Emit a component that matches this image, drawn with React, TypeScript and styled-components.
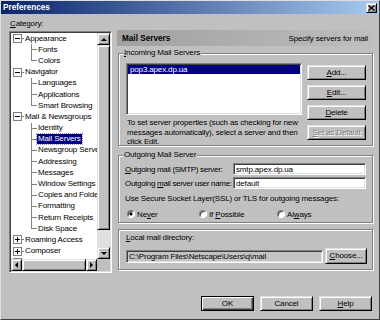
import React from 'react';
import styled, { createGlobalStyle, css } from 'styled-components';

const FONT = `"Liberation Sans", Arial, sans-serif`;

const GlobalStyle = createGlobalStyle`
  html, body {
    margin: 0;
    padding: 0;
    background: #c0c0c0;
  }
  body {
    font-family: ${FONT};
  }
`;

const raised = css`
  box-sizing: border-box;
  background: #c0c0c0;
  border: 1px solid;
  border-color: #dfdfdf #000 #000 #dfdfdf;
  box-shadow: inset 1px 1px #fff, inset -1px -1px #808080;
`;

const sunken = css`
  box-sizing: border-box;
  border: 1px solid;
  border-color: #808080 #fff #fff #808080;
  box-shadow: inset 1px 1px #404040, inset -1px -1px #dfdfdf;
  padding: 1px;
`;

const Window = styled.div`
  width: 380px;
  height: 320px;
  box-sizing: border-box;
  display: flex;
  flex-direction: column;
  background: #c0c0c0;
  border: 1px solid;
  border-color: #dfdfdf #404040 #404040 #dfdfdf;
  font-family: ${FONT};
  font-size: 8px;
  letter-spacing: -0.15px;
  color: #000;
  overflow: hidden;
`;

const TitleBar = styled.div`
  height: 13px;
  flex: none;
  display: flex;
  align-items: center;
  justify-content: space-between;
  padding: 0 2px 0 2px;
  background: linear-gradient(to right, #0a246a, #a6caf0);
`;

const Title = styled.span`
  color: #fff;
  font-weight: bold;
  font-size: 8.2px;
  letter-spacing: 0;
`;

const CloseButton = styled.span`
  ${raised};
  width: 11px;
  height: 10px;
  display: flex;
  align-items: center;
  justify-content: center;
`;

const Body = styled.div`
  display: flex;
  padding: 5px 6px 0 8px;
`;

const LeftPane = styled.div`
  width: 103px;
  flex: none;
  display: flex;
  flex-direction: column;
`;

const PaneLabel = styled.div`
  height: 10px;
  line-height: 10px;
  margin-bottom: 2px;
  padding-left: 1px;
`;

const U = styled.span`
  text-decoration: underline;
`;

const TreeBox = styled.div`
  ${sunken};
  width: 103px;
  height: 242px;
  display: flex;
  flex-direction: column;
`;

const TreeMain = styled.div`
  flex: 1;
  min-height: 0;
  display: flex;
`;

const TreeList = styled.div`
  flex: 1;
  min-width: 0;
  overflow: hidden;
  background: #fff;
`;

const TreeRow = styled.div`
  height: 11.2px;
  display: flex;
  align-items: center;
  white-space: nowrap;
`;

const Expander = styled.svg`
  flex: none;
  margin-left: 2px;
`;

const Dash = styled.span`
  flex: none;
  width: 2px;
  height: 1px;
  background: #808080;
`;

const Connector = styled.span<{ $last: boolean }>`
  flex: none;
  align-self: stretch;
  width: 6px;
  margin-left: 20px;
  background:
    linear-gradient(#808080, #808080) left top / 1px ${(p) => (p.$last ? '50%' : '100%')} no-repeat,
    linear-gradient(#808080, #808080) left center / 100% 1px no-repeat;
`;

const ItemLabel = styled.span<{ $selected?: boolean }>`
  padding: 0 1px;
  line-height: 10px;
  ${(p) =>
    p.$selected &&
    css`
      background: #000080;
      color: #fff;
      outline: 1px dotted #9090c8;
    `}
`;

const VScroll = styled.div`
  width: 13px;
  flex: none;
  display: flex;
  flex-direction: column;
  background: #e0e0e0;
`;

const ScrollArrow = styled.div<{ $w: number; $h: number }>`
  ${raised};
  flex: none;
  width: ${(p) => p.$w}px;
  height: ${(p) => p.$h}px;
  display: flex;
  align-items: center;
  justify-content: center;
`;

const Thumb = styled.div<{ $size?: number }>`
  ${raised};
  flex: ${(p) => (p.$size ? 'none' : '1')};
  ${(p) => p.$size && `height: ${p.$size}px;`}
`;

const Track = styled.div`
  flex: 1;
  background: #e0e0e0;
`;

const HScroll = styled.div`
  height: 12px;
  flex: none;
  display: flex;
`;

const Corner = styled.div`
  width: 13px;
  flex: none;
  background: #c0c0c0;
`;

const RightPane = styled.div`
  flex: 1;
  margin-left: 5px;
  padding-top: 11px;
  display: flex;
  flex-direction: column;
`;

const PanelHeader = styled.div`
  height: 16px;
  display: flex;
  align-items: center;
  justify-content: space-between;
  padding: 0 6px 0 5px;
  background: linear-gradient(to right, #a0a0a0, #bebebe);
`;

const HeaderTitle = styled.span`
  font-weight: bold;
  font-size: 8.2px;
  letter-spacing: 0;
`;

const GroupBox = styled.div<{ $height: number; $gap: number }>`
  position: relative;
  box-sizing: border-box;
  height: ${(p) => p.$height}px;
  margin: ${(p) => p.$gap}px 1px 0 1px;
  border: 1px solid #808080;
  box-shadow: inset 1px 1px #fff, 1px 1px #fff;
`;

const Caption = styled.span`
  position: absolute;
  top: -6px;
  left: 4px;
  padding: 0 1px;
  line-height: 10px;
  background: #c0c0c0;
`;

const IncomingBody = styled.div`
  display: flex;
  gap: 5px;
  padding: 9px 5px 0 7px;
`;

const ListColumn = styled.div`
  width: 176px;
  flex: none;
`;

const ServerList = styled.div`
  ${sunken};
  height: 52px;
  background: #fff;
`;

const ServerItem = styled.div`
  height: 9px;
  line-height: 9px;
  padding-left: 2px;
  background: #000080;
  color: #fff;
`;

const Hint = styled.p`
  margin: 3px 0 0 1px;
  line-height: 9.5px;
  white-space: nowrap;
`;

const ButtonColumn = styled.div`
  display: flex;
  flex-direction: column;
  gap: 5px;
  padding-top: 2px;
`;

const Button = styled.button<{ $w: number; $h?: number; $primary?: boolean }>`
  ${raised};
  width: ${(p) => p.$w}px;
  height: ${(p) => p.$h ?? 15}px;
  flex: none;
  padding: 0;
  margin: 0;
  font-family: ${FONT};
  font-size: 8px;
  letter-spacing: -0.15px;
  line-height: 10px;
  color: #000;
  text-align: center;
  &:disabled {
    color: #808080;
    text-shadow: 1px 1px 0 #fff;
  }
  ${(p) =>
    p.$primary &&
    css`
      border-color: #000;
      box-shadow: inset 1px 1px #fff, inset -1px -1px #404040, inset -2px -2px #808080;
    `}
`;

const OutgoingBody = styled.div`
  padding: 7px 5px 0 6px;
  display: flex;
  flex-direction: column;
`;

const FieldRow = styled.div<{ $gap?: number }>`
  display: flex;
  align-items: center;
  height: 12px;
  margin-top: ${(p) => p.$gap ?? 0}px;
`;

const FieldLabel = styled.span`
  width: 108px;
  flex: none;
  white-space: nowrap;
  letter-spacing: -0.3px;
`;

const TextInput = styled.input<{ $w: number; $h: number; $readonly?: boolean }>`
  ${sunken};
  width: ${(p) => p.$w}px;
  height: ${(p) => p.$h}px;
  flex: none;
  margin: 0;
  padding: 0 2px;
  background: ${(p) => (p.$readonly ? '#c4c4c4' : '#fff')};
  font-family: ${FONT};
  font-size: 8px;
  letter-spacing: -0.15px;
  color: #000;
  outline: none;
`;

const Line = styled.div<{ $gap: number }>`
  line-height: 10px;
  margin-top: ${(p) => p.$gap}px;
`;

const RadioRow = styled.div`
  display: flex;
  align-items: center;
  height: 10px;
  margin-top: 5px;
  padding-left: 2px;
`;

const RadioItem = styled.label<{ $w?: number }>`
  display: flex;
  align-items: center;
  gap: 2px;
  ${(p) => p.$w && `width: ${p.$w}px;`}
  flex: none;
`;

const RadioDot = styled.span<{ $checked?: boolean }>`
  width: 8px;
  height: 8px;
  box-sizing: border-box;
  border-radius: 50%;
  border: 1px solid;
  border-color: #808080 #fff #fff #808080;
  box-shadow: inset 1px 1px #404040;
  background: ${(p) => (p.$checked ? 'radial-gradient(circle, #000 0 1.3px, #fff 1.8px)' : '#fff')};
`;

const LocalBody = styled.div`
  padding: 3px 5px 0 7px;
`;

const LocalRow = styled.div`
  display: flex;
  align-items: center;
  gap: 2px;
  height: 16px;
  margin-top: 5px;
`;

const Footer = styled.div`
  display: flex;
  justify-content: flex-end;
  gap: 6px;
  margin-top: 23px;
  padding-right: 7px;
`;

type TreeNode = { label: string; open: boolean; children?: string[] };

const tree: TreeNode[] = [
  { label: 'Appearance', open: true, children: ['Fonts', 'Colors'] },
  { label: 'Navigator', open: true, children: ['Languages', 'Applications', 'Smart Browsing'] },
  {
    label: 'Mail & Newsgroups',
    open: true,
    children: [
      'Identity',
      'Mail Servers',
      'Newsgroup Servers',
      'Addressing',
      'Messages',
      'Window Settings',
      'Copies and Folders',
      'Formatting',
      'Return Receipts',
      'Disk Space',
    ],
  },
  { label: 'Roaming Access', open: false },
  { label: 'Composer', open: false },
  { label: 'Offline', open: false },
];

const ExpandBox = ({ open }: { open: boolean }) => (
  <Expander width="9" height="9" viewBox="0 0 9 9">
    <rect x="0.5" y="0.5" width="8" height="8" fill="#fff" stroke="#808080" />
    <line x1="2" y1="4.5" x2="7" y2="4.5" stroke="#000" />
    {!open && <line x1="4.5" y1="2" x2="4.5" y2="7" stroke="#000" />}
  </Expander>
);

const Arrow = ({ dir }: { dir: 'up' | 'down' | 'left' | 'right' }) => {
  const pts = {
    up: '0,3 3,0 6,3',
    down: '0,0 6,0 3,3',
    left: '3,0 3,6 0,3',
    right: '0,0 0,6 3,3',
  }[dir];
  const vertical = dir === 'up' || dir === 'down';
  return (
    <svg width={vertical ? 6 : 3} height={vertical ? 3 : 6} viewBox={vertical ? '0 0 6 3' : '0 0 3 6'}>
      <polygon points={pts} fill="#000" />
    </svg>
  );
};

const CategoryTree = () => (
  <TreeBox>
    <TreeMain>
      <TreeList>
        {tree.map((node) => (
          <React.Fragment key={node.label}>
            <TreeRow>
              <ExpandBox open={node.open} />
              <Dash />
              <ItemLabel>{node.label}</ItemLabel>
            </TreeRow>
            {node.open &&
              node.children?.map((child, i) => (
                <TreeRow key={child}>
                  <Connector $last={i === node.children!.length - 1} />
                  <ItemLabel $selected={child === 'Mail Servers'}>{child}</ItemLabel>
                </TreeRow>
              ))}
          </React.Fragment>
        ))}
      </TreeList>
      <VScroll>
        <ScrollArrow $w={13} $h={12}>
          <Arrow dir="up" />
        </ScrollArrow>
        <Thumb $size={185} />
        <Track />
        <ScrollArrow $w={13} $h={12}>
          <Arrow dir="down" />
        </ScrollArrow>
      </VScroll>
    </TreeMain>
    <HScroll>
      <ScrollArrow $w={11} $h={12}>
        <Arrow dir="left" />
      </ScrollArrow>
      <Thumb />
      <ScrollArrow $w={11} $h={12}>
        <Arrow dir="right" />
      </ScrollArrow>
      <Corner />
    </HScroll>
  </TreeBox>
);

export default function App() {
  return (
    <>
      <GlobalStyle />
      <Window>
        <TitleBar>
          <Title>Preferences</Title>
          <CloseButton>
            <svg width="7" height="6" viewBox="0 0 7 6">
              <path d="M0.5 0.5 L6.5 5.5 M6.5 0.5 L0.5 5.5" stroke="#000" strokeWidth="1.4" />
            </svg>
          </CloseButton>
        </TitleBar>

        <Body>
          <LeftPane>
            <PaneLabel>
              <U>C</U>ategory:
            </PaneLabel>
            <CategoryTree />
          </LeftPane>

          <RightPane>
            <PanelHeader>
              <HeaderTitle>Mail Servers</HeaderTitle>
              <span>Specify servers for mail</span>
            </PanelHeader>

            <GroupBox $height={93} $gap={7}>
              <Caption>
                <U>I</U>ncoming Mail Servers
              </Caption>
              <IncomingBody>
                <ListColumn>
                  <ServerList>
                    <ServerItem>pop3.apex.dp.ua</ServerItem>
                  </ServerList>
                  <Hint>
                    To set server properties (such as checking for new
                    <br />
                    messages automatically), select a server and then
                    <br />
                    click Edit.
                  </Hint>
                </ListColumn>
                <ButtonColumn>
                  <Button $w={59}>
                    <U>A</U>dd...
                  </Button>
                  <Button $w={59}>
                    <U>E</U>dit...
                  </Button>
                  <Button $w={59}>
                    <U>D</U>elete
                  </Button>
                  <Button $w={59} disabled>
                    <U>S</U>et as Default
                  </Button>
                </ButtonColumn>
              </IncomingBody>
            </GroupBox>

            <GroupBox $height={68} $gap={9}>
              <Caption>Outgoing Mail Server</Caption>
              <OutgoingBody>
                <FieldRow>
                  <FieldLabel>
                    <U>O</U>utgoing mail (SMTP) server:
                  </FieldLabel>
                  <TextInput $w={133} $h={12} readOnly value="smtp.apex.dp.ua" />
                </FieldRow>
                <FieldRow $gap={2}>
                  <FieldLabel>
                    Outgoing <U>m</U>ail server user name:
                  </FieldLabel>
                  <TextInput $w={133} $h={12} readOnly value="default" />
                </FieldRow>
                <Line $gap={5}>Use Secure Socket Layer(SSL) or TLS for outgoing messages:</Line>
                <RadioRow>
                  <RadioItem $w={72}>
                    <RadioDot $checked />
                    <span>
                      Ne<U>v</U>er
                    </span>
                  </RadioItem>
                  <RadioItem $w={78}>
                    <RadioDot />
                    <span>
                      If <U>P</U>ossible
                    </span>
                  </RadioItem>
                  <RadioItem>
                    <RadioDot />
                    <span>
                      Al<U>w</U>ays
                    </span>
                  </RadioItem>
                </RadioRow>
              </OutgoingBody>
            </GroupBox>

            <GroupBox $height={41} $gap={6}>
              <LocalBody>
                <Line $gap={0}>
                  <U>L</U>ocal mail directory:
                </Line>
                <LocalRow>
                  <TextInput $w={197} $h={13} $readonly readOnly value="C:\Program Files\Netscape\Users\q\mail" />
                  <Button $w={42} $h={16}>
                    <U>C</U>hoose...
                  </Button>
                </LocalRow>
              </LocalBody>
            </GroupBox>
          </RightPane>
        </Body>

        <Footer>
          <Button $w={53} $primary>
            OK
          </Button>
          <Button $w={53}>Cancel</Button>
          <Button $w={53}>
            <U>H</U>elp
          </Button>
        </Footer>
      </Window>
    </>
  );
}
